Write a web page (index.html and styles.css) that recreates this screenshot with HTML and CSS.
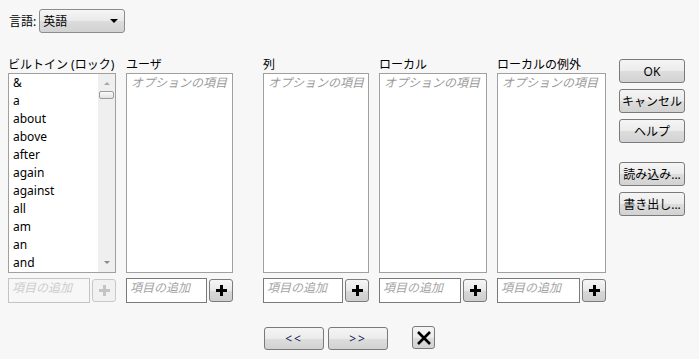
FILE: index.html
```html
<!DOCTYPE html>
<html lang="ja">
<head>
  <meta charset="UTF-8">
  <title>ストップワード</title>
  <link rel="stylesheet" href="styles.css">
</head>
<body>

  <div class="lang-row">
    <span class="lang-label">言語:</span>
    <button class="dropdown"><span>英語</span><span class="caret"></span></button>
  </div>

  <div class="main">
    <!-- built-in words, read only -->
    <div class="col col-builtin">
      <div class="col-title">ビルトイン (ロック)</div>
      <div class="list">
        <ul class="items">
          <li>&amp;</li>
          <li>a</li>
          <li>about</li>
          <li>above</li>
          <li>after</li>
          <li>again</li>
          <li>against</li>
          <li>all</li>
          <li>am</li>
          <li>an</li>
          <li>and</li>
        </ul>
        <div class="scrollbar">
          <span class="arrow-up"></span>
          <span class="thumb"></span>
          <span class="track"></span>
          <span class="arrow-down"></span>
        </div>
      </div>
      <div class="add-row">
        <input class="add-input" placeholder="項目の追加" disabled>
        <button class="plus" disabled>
          <svg width="11" height="11" viewBox="0 0 11 11"><path d="M4 0h3v4h4v3H7v4H4V7H0V4h4z" fill="#c4c4c4"/></svg>
        </button>
      </div>
    </div>

    <div class="col col-user">
      <div class="col-title">ユーザ</div>
      <div class="list"><div class="empty">オプションの項目</div></div>
      <div class="add-row">
        <input class="add-input" placeholder="項目の追加">
        <button class="plus"><svg width="11" height="11" viewBox="0 0 11 11"><path d="M4 0h3v4h4v3H7v4H4V7H0V4h4z" fill="#000"/></svg></button>
      </div>
    </div>

    <div class="col col-column">
      <div class="col-title">列</div>
      <div class="list"><div class="empty">オプションの項目</div></div>
      <div class="add-row">
        <input class="add-input" placeholder="項目の追加">
        <button class="plus"><svg width="11" height="11" viewBox="0 0 11 11"><path d="M4 0h3v4h4v3H7v4H4V7H0V4h4z" fill="#000"/></svg></button>
      </div>
    </div>

    <div class="col col-local">
      <div class="col-title">ローカル</div>
      <div class="list"><div class="empty">オプションの項目</div></div>
      <div class="add-row">
        <input class="add-input" placeholder="項目の追加">
        <button class="plus"><svg width="11" height="11" viewBox="0 0 11 11"><path d="M4 0h3v4h4v3H7v4H4V7H0V4h4z" fill="#000"/></svg></button>
      </div>
    </div>

    <div class="col col-except">
      <div class="col-title">ローカルの例外</div>
      <div class="list"><div class="empty">オプションの項目</div></div>
      <div class="add-row">
        <input class="add-input" placeholder="項目の追加">
        <button class="plus"><svg width="11" height="11" viewBox="0 0 11 11"><path d="M4 0h3v4h4v3H7v4H4V7H0V4h4z" fill="#000"/></svg></button>
      </div>
    </div>

    <!-- dialog buttons -->
    <div class="actions">
      <button class="btn">OK</button>
      <button class="btn">キャンセル</button>
      <button class="btn">ヘルプ</button>
      <button class="btn btn-file">読み込み...</button>
      <button class="btn">書き出し...</button>
    </div>
  </div>

  <div class="nav-row">
    <button class="btn btn-nav">&lt;&lt;</button>
    <button class="btn btn-nav">&gt;&gt;</button>
    <button class="btn btn-close">
      <svg width="16" height="16" viewBox="0 0 16 16"><path d="M2 2L14 14M14 2L2 14" stroke="#000" stroke-width="2.6" fill="none"/></svg>
    </button>
  </div>

</body>
</html>
```

FILE: styles.css
```css
body { margin:0; padding:9px 0 0 8px; background:#f7f7f7; color:#000;
       font-family:'Noto Sans','Noto Sans CJK JP',sans-serif; font-size:12px; }

button { font-family:inherit; font-size:12px; color:#000; }

/* language picker */
.lang-row { display:flex; align-items:center; height:24px; }
.lang-label { margin:0 3px 0 1px; }
.dropdown {
  display:flex; align-items:center; justify-content:space-between;
  width:86px; height:24px; padding:0 6px 0 3px; box-sizing:border-box;
  border:1px solid #8c8c8c; border-radius:3px;
  background:linear-gradient(#f6f6f6, #e9e9e9 50%, #dcdcdc 51%, #d2d2d2);
}
.caret { width:0; height:0; border-left:4px solid transparent;
         border-right:4px solid transparent; border-top:4px solid #000; }

/* columns */
.main { display:flex; gap:10px; margin-top:24px; }
.col { display:flex; flex-direction:column; }
.col-builtin { width:108px; }
.col-user { width:107px; }
.col-column { width:106px; margin-left:20px; }
.col-local { width:108px; }
.col-except { width:109px; }
.col-title { height:16px; line-height:16px; white-space:nowrap; }

.list {
  display:flex; height:200px; box-sizing:border-box;
  border:1px solid #a0a0a0; background:#fff;
}
.items { flex:1; list-style:none; margin:0; padding:0 0 0 4px; }
.items li { height:18px; line-height:18px; }
.empty { padding:0 0 0 4px; height:18px; line-height:18px;
         color:#9a9a9a; font-style:italic; white-space:nowrap; }

.scrollbar { width:17px; background:#efefef; display:flex;
             flex-direction:column; align-items:center; }
.arrow-up { margin-top:8px; width:0; height:0; border-left:3px solid transparent;
            border-right:3px solid transparent; border-bottom:3px solid #a8a8a8; }
.thumb { margin-top:6px; width:13px; height:6px; border:1px solid #9c9c9c;
         border-radius:2px; background:linear-gradient(#fafafa,#e2e2e2); }
.track { flex:1; }
.arrow-down { margin-bottom:8px; width:0; height:0; border-left:3px solid transparent;
              border-right:3px solid transparent; border-top:3px solid #8a8a8a; }

.add-row { display:flex; gap:2px; margin-top:5px; height:25px; align-items:center; }
.add-input {
  flex:1; min-width:0; height:25px; box-sizing:border-box; margin:0;
  padding:0 0 6px 3px; border:1px solid #7a7a7a; background:#fff;
  font-family:inherit; font-size:12px;
}
.add-input::placeholder { color:#a4a4a4; font-style:italic; }
.add-input:disabled { border-color:#c4c4c4; background:#f7f7f7; }
.add-input:disabled::placeholder { color:#cdcdcd; }

.plus {
  width:24px; height:23px; padding:0; display:flex; align-items:center;
  justify-content:center; border:1px solid #7c7c7c; border-radius:3px;
  background:linear-gradient(#f6f6f6, #e8e8e8 50%, #d8d8d8 51%, #cecece);
}
.plus:disabled { border-color:#c8c8c8; background:#f1f1f1; }

/* dialog buttons */
.actions { display:flex; flex-direction:column; gap:6px; margin:2px 0 0 3px; }
.btn {
  height:24px; padding:0; border:1px solid #7a7a7a; border-radius:3px;
  background:linear-gradient(#f5f5f5, #ebebeb 50%, #dddddd 51%, #d2d2d2);
}
.actions .btn { width:66px; }
.btn-file { margin-top:13px; }

.nav-row { display:flex; justify-content:center; align-items:flex-start; gap:4px;
           margin:23px 0 0 -8px; }
.btn-nav { width:60px; height:23px; margin-top:1px; color:#102050; letter-spacing:2px; }
.btn-close { width:23px; height:23px; margin-left:20px; display:flex;
             align-items:center; justify-content:center; }
```
